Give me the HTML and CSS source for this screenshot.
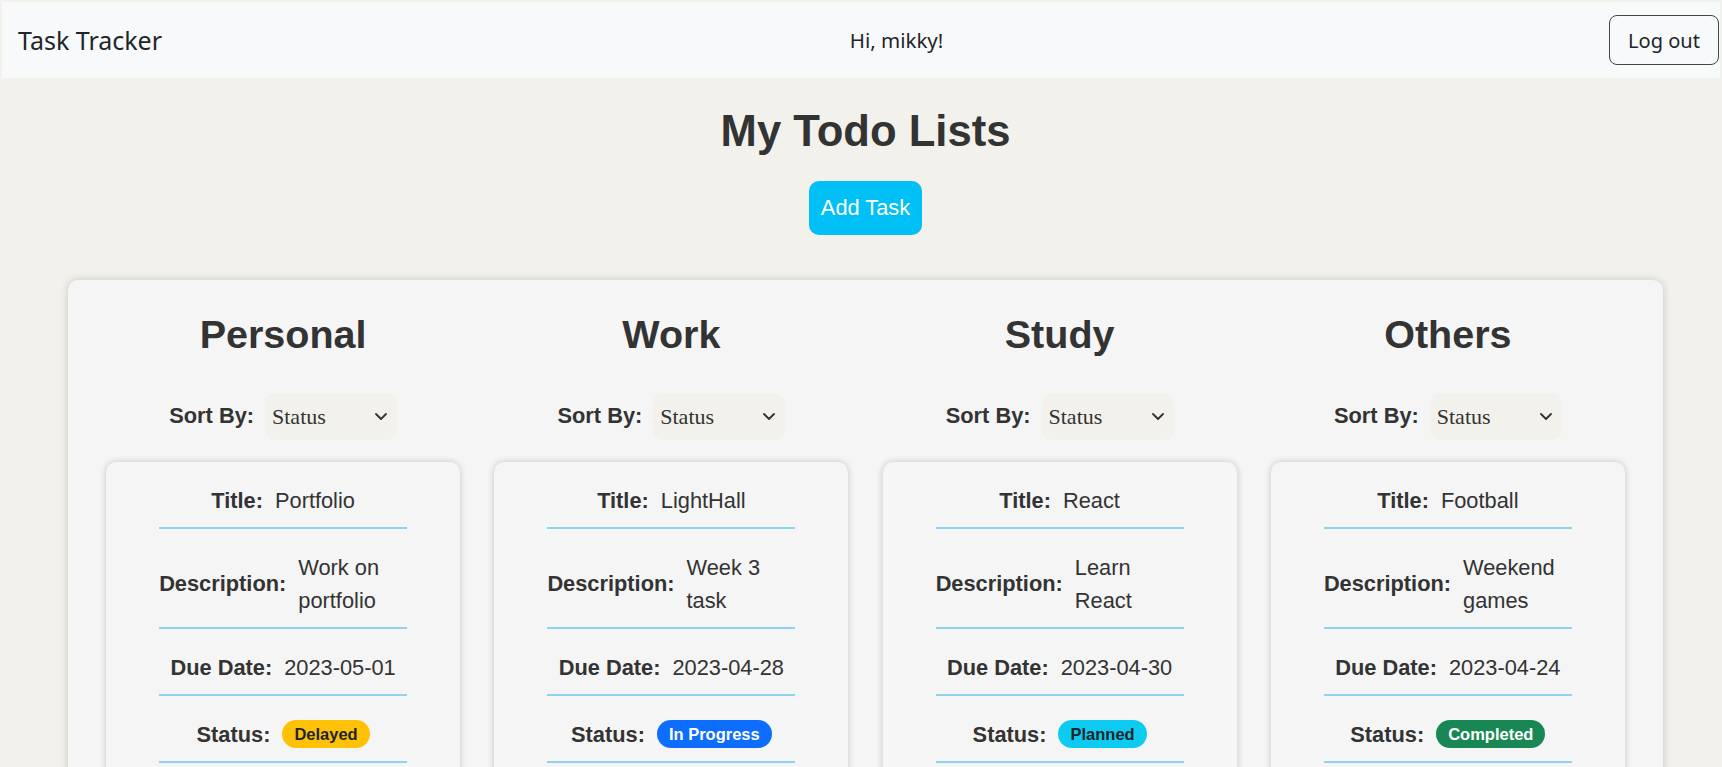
FILE: index.html
```html
<!DOCTYPE html>
<html lang="en">
<head>
<meta charset="utf-8">
<title>Task Tracker</title>
<link rel="stylesheet" href="styles.css">
</head>
<body>
<nav class="navbar">
  <span class="brand">Task Tracker</span>
  <span class="greeting">Hi, mikky!</span>
  <button class="logout">Log out</button>
</nav>
<main class="page">
  <h1 class="page-title">My Todo Lists</h1>
  <button class="add-btn">Add Task</button>
  <section class="board">
    <div class="column">
      <h2 class="col-title">Personal</h2>
      <div class="sort">
        <label class="sort-label">Sort By:</label>
        <span class="select-wrap">
          <select class="sort-select"><option>Status</option></select>
          <svg class="chev" viewBox="0 0 12 7" width="12" height="7"><path d="M1 1l5 5 5-5" fill="none" stroke="#333" stroke-width="1.8" stroke-linecap="round" stroke-linejoin="round"/></svg>
        </span>
      </div>
      <div class="task">
        <div class="row"><b class="lbl">Title:</b><span class="val">Portfolio</span></div>
        <div class="row"><b class="lbl">Description:</b><span class="val">Work on portfolio</span></div>
        <div class="row"><b class="lbl">Due Date:</b><span class="val">2023-05-01</span></div>
        <div class="row"><b class="lbl">Status:</b><span class="badge delayed">Delayed</span></div>
      </div>
    </div>
    <div class="column">
      <h2 class="col-title">Work</h2>
      <div class="sort">
        <label class="sort-label">Sort By:</label>
        <span class="select-wrap">
          <select class="sort-select"><option>Status</option></select>
          <svg class="chev" viewBox="0 0 12 7" width="12" height="7"><path d="M1 1l5 5 5-5" fill="none" stroke="#333" stroke-width="1.8" stroke-linecap="round" stroke-linejoin="round"/></svg>
        </span>
      </div>
      <div class="task">
        <div class="row"><b class="lbl">Title:</b><span class="val">LightHall</span></div>
        <div class="row"><b class="lbl">Description:</b><span class="val">Week 3 task</span></div>
        <div class="row"><b class="lbl">Due Date:</b><span class="val">2023-04-28</span></div>
        <div class="row"><b class="lbl">Status:</b><span class="badge progress">In Progress</span></div>
      </div>
    </div>
    <div class="column">
      <h2 class="col-title">Study</h2>
      <div class="sort">
        <label class="sort-label">Sort By:</label>
        <span class="select-wrap">
          <select class="sort-select"><option>Status</option></select>
          <svg class="chev" viewBox="0 0 12 7" width="12" height="7"><path d="M1 1l5 5 5-5" fill="none" stroke="#333" stroke-width="1.8" stroke-linecap="round" stroke-linejoin="round"/></svg>
        </span>
      </div>
      <div class="task">
        <div class="row"><b class="lbl">Title:</b><span class="val">React</span></div>
        <div class="row"><b class="lbl">Description:</b><span class="val">Learn React</span></div>
        <div class="row"><b class="lbl">Due Date:</b><span class="val">2023-04-30</span></div>
        <div class="row"><b class="lbl">Status:</b><span class="badge planned">Planned</span></div>
      </div>
    </div>
    <div class="column">
      <h2 class="col-title">Others</h2>
      <div class="sort">
        <label class="sort-label">Sort By:</label>
        <span class="select-wrap">
          <select class="sort-select"><option>Status</option></select>
          <svg class="chev" viewBox="0 0 12 7" width="12" height="7"><path d="M1 1l5 5 5-5" fill="none" stroke="#333" stroke-width="1.8" stroke-linecap="round" stroke-linejoin="round"/></svg>
        </span>
      </div>
      <div class="task">
        <div class="row"><b class="lbl">Title:</b><span class="val">Football</span></div>
        <div class="row"><b class="lbl">Description:</b><span class="val">Weekend games</span></div>
        <div class="row"><b class="lbl">Due Date:</b><span class="val">2023-04-24</span></div>
        <div class="row"><b class="lbl">Status:</b><span class="badge completed">Completed</span></div>
      </div>
    </div>
  </section>
</main>
</body>
</html>
```

FILE: styles.css
```css
* { box-sizing: border-box; }

body {
  margin: 0;
  background: #f2f1ec;
  color: #333;
  font-family: "Liberation Sans", Arial, sans-serif;
}

.navbar {
  height: 76px;
  margin: 2px 2px 0 2px;
  background: #f8f9fa;
  display: flex;
  align-items: center;
  justify-content: space-between;
  padding: 0 1px 0 16px;
  font-family: "Noto Sans", "Open Sans", sans-serif;
  color: #212529;
}

.brand {
  font-size: 25px;
  margin-right: 22px;
}

.greeting {
  font-size: 20.5px;
}

.logout {
  width: 110px;
  height: 50px;
  background: transparent;
  border: 1px solid #444;
  border-radius: 8px;
  font-family: "Noto Sans", "Open Sans", sans-serif;
  font-size: 20px;
  color: #212529;
}

.page {
  display: flex;
  flex-direction: column;
  align-items: center;
  padding: 0 59px 40px 68px;
}

.page-title {
  margin: 28px 0 0;
  font-size: 43.6px;
  font-weight: bold;
  line-height: 1.15;
  color: #333;
}

.add-btn {
  margin-top: 25px;
  width: 113px;
  height: 54px;
  border: none;
  border-radius: 10px;
  background: #00c0f5;
  color: #fff;
  font-family: "Liberation Sans", Arial, sans-serif;
  font-size: 21.8px;
}

.board {
  align-self: stretch;
  margin-top: 45px;
  background: #f5f5f5;
  border-radius: 10px;
  box-shadow: 0 0 8px rgba(0, 0, 0, 0.18);
  padding: 0 21px 30px;
  display: grid;
  grid-template-columns: repeat(4, 1fr);
}

.column {
  display: flex;
  flex-direction: column;
  align-items: center;
}

.col-title {
  margin: 32px 0 0;
  font-size: 39.5px;
  line-height: 1.15;
  font-weight: bold;
  color: #333;
}

.sort {
  margin-top: 35px;
  display: flex;
  align-items: center;
  gap: 11px;
}

.sort-label {
  font-size: 21.8px;
  font-weight: bold;
}

.select-wrap {
  position: relative;
  display: inline-block;
}

.sort-select {
  appearance: none;
  -webkit-appearance: none;
  width: 132px;
  height: 47px;
  border: none;
  border-radius: 10px;
  background: #f2f1ec;
  padding: 0 0 0 7px;
  font-family: "Liberation Serif", "Times New Roman", serif;
  font-size: 22px;
  color: #333;
}

.chev {
  position: absolute;
  right: 10px;
  top: 20px;
  pointer-events: none;
}

.task {
  margin-top: 22px;
  width: 354px;
  background: #f5f5f5;
  border-radius: 10px;
  box-shadow: 0 0 7px rgba(0, 0, 0, 0.2);
  display: flex;
  flex-direction: column;
  align-items: center;
  padding-bottom: 20px;
}

.row {
  width: 248px;
  display: flex;
  justify-content: center;
  align-items: center;
  gap: 12px;
  padding: 22px 0 10px;
  border-bottom: 2px solid #8fd4ee;
  font-size: 21.8px;
  line-height: 33px;
}

.lbl {
  flex-shrink: 0;
  font-weight: bold;
}

.badge {
  display: inline-block;
  height: 28px;
  line-height: 28px;
  padding: 0 12px;
  border-radius: 14px;
  font-size: 16.5px;
  font-weight: bold;
}

.delayed { background: #ffc107; color: #212529; }
.progress { background: #0d6efd; color: #fff; }
.planned { background: #0dcaf0; color: #212529; }
.completed { background: #198754; color: #fff; }
```
